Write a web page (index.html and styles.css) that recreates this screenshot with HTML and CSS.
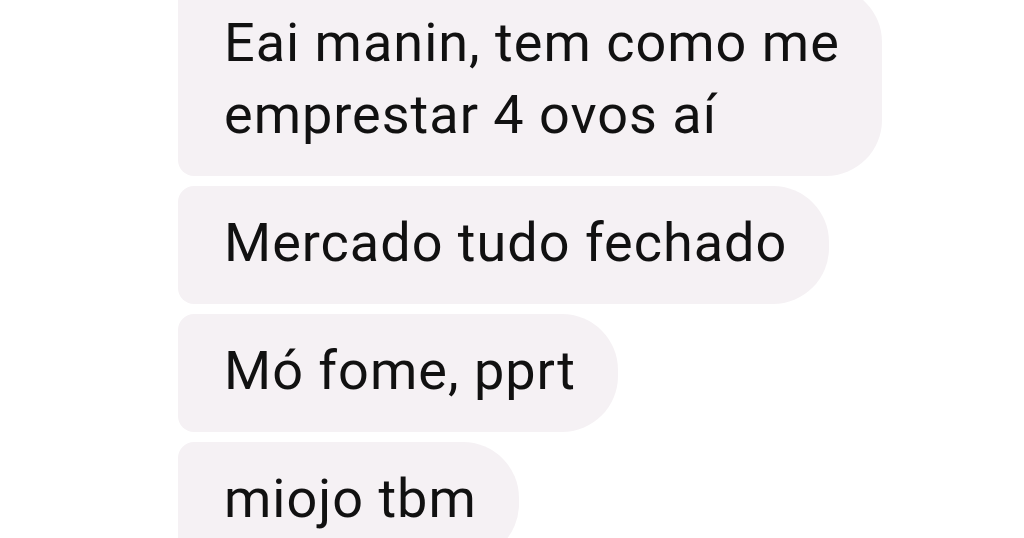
FILE: index.html
```html
<!DOCTYPE html>
<html lang="pt-BR">
<head>
    <meta charset="UTF-8">
    <meta name="viewport" content="width=device-width, initial-scale=1.0">
    <title>Conversa</title>
    <link rel="stylesheet" href="styles.css">
</head>
<body>
    <div class="conversa">
        <div class="mensagem">Eai manin, tem como me<br>emprestar 4 ovos aí</div>
        <div class="mensagem">Mercado tudo fechado</div>
        <div class="mensagem">Mó fome, pprt</div>
        <div class="mensagem">miojo tbm</div>
    </div>
</body>
</html>
```

FILE: styles.css
```css
* {
    margin: 0;
    padding: 0;
    box-sizing: border-box;
}

body {
    font-family: Roboto, 'Noto Sans', sans-serif;
    background-color: #fff;
    color: #111;
    height: 100vh;
    overflow: hidden;
}

.conversa {
    display: flex;
    flex-direction: column;
    align-items: flex-start;
    gap: 10px;
    padding-left: 178px;
    margin-top: -14px;
}

.mensagem {
    background-color: #f5f1f4;
    font-size: 54px;
    letter-spacing: 1px;
    line-height: 72px;
    padding: 21px 42px 25px 46px;
    border-radius: 16px 56px 56px 16px;
    white-space: nowrap;
}
```
